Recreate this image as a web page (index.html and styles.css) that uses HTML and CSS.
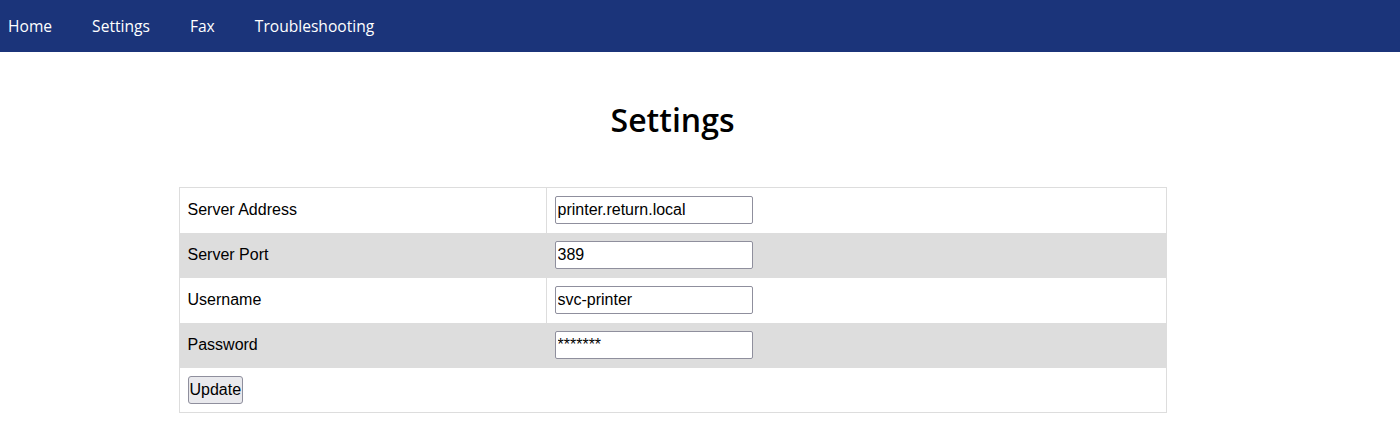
FILE: index.html
```html
<!DOCTYPE html>
<html lang="en">
<head>
    <meta charset="UTF-8">
    <meta name="viewport" content="width=device-width, initial-scale=1.0">
    <title>Settings</title>
    <link rel="stylesheet" href="styles.css">
</head>
<body>
    <nav class="topnav">
        <a href="#">Home</a>
        <a href="#">Settings</a>
        <a href="#">Fax</a>
        <a href="#">Troubleshooting</a>
    </nav>
    <div class="main">
        <h1>Settings</h1>
        <form action="#" class="settings">
            <table>
                <tr>
                    <td>Server Address</td>
                    <td><input type="text" value="printer.return.local"></td>
                </tr>
                <tr>
                    <td>Server Port</td>
                    <td><input type="text" value="389"></td>
                </tr>
                <tr>
                    <td>Username</td>
                    <td><input type="text" value="svc-printer"></td>
                </tr>
                <tr>
                    <td>Password</td>
                    <td><input type="text" value="*******"></td>
                </tr>
                <tr>
                    <td colspan="2"><button type="submit">Update</button></td>
                </tr>
            </table>
        </form>
    </div>
</body>
</html>
```

FILE: styles.css
```css
*{
    box-sizing: border-box;
}

body{
    margin: 0;
    background: #fff;
    font-family: "Liberation Sans", Arial, sans-serif;
}

.topnav{
    display: flex;
    gap: 40px;
    height: 52px;
    align-items: center;
    padding: 0 8px;
    background: #1b347a;
}

.topnav a{
    color: #fff;
    text-decoration: none;
    font-family: "Open Sans", sans-serif;
    font-size: 15.6px;
}

.main{
    width: 1345px;
}

.main h1{
    margin: 48px 0 47px;
    text-align: center;
    font-family: "Open Sans", sans-serif;
    font-size: 32px;
    font-weight: 600;
    line-height: 40px;
    color: #000;
}

.settings table{
    width: 988px;
    margin: 0 auto;
    border-collapse: collapse;
    border: 1px solid #ddd;
}

.settings td{
    height: 45px;
    padding: 0 8px;
    font-size: 16px;
    color: #000;
}

.settings td:first-child{
    width: 367px;
    border-right: 1px solid #ddd;
}

.settings tr:nth-child(even){
    background: #ddd;
}

.settings input{
    width: 198px;
    height: 28px;
    padding: 1px 2px;
    font-family: "Liberation Sans", Arial, sans-serif;
    font-size: 16px;
    border: 1px solid #8f8f9d;
    border-radius: 2px;
    background: #fff;
}

.settings button{
    height: 28px;
    padding: 1px 1px;
    font-family: "Liberation Sans", Arial, sans-serif;
    font-size: 16px;
    color: #000;
    background: #e9e9ed;
    border: 1px solid #8f8f9d;
    border-radius: 3px;
}
```
